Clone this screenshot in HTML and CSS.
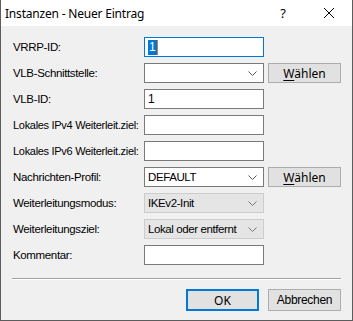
FILE: index.html
```html
<!DOCTYPE html>
<html lang="de">

<head>
    <meta charset="UTF-8">
    <meta name="viewport" content="width=device-width, initial-scale=1.0">
    <title>Instanzen - Neuer Eintrag</title>
    <link rel="stylesheet" href="styles.css">
</head>

<body>
    <div class="fenster">
        <div class="titel">
            <span class="titel-text">Instanzen - Neuer Eintrag</span>
            <span class="hilfe">?</span>
            <span class="schliessen">
                <svg width="12" height="12" viewBox="0 0 12 12">
                    <path d="M1 1 L11 11 M11 1 L1 11" stroke="#000" stroke-width="1" fill="none" />
                </svg>
            </span>
        </div>

        <div class="formular">
            <label>VRRP-ID:</label>
            <div class="feld fokus"><span class="markiert">1</span></div>
            <div></div>

            <label>VLB-Schnittstelle:</label>
            <div class="feld auswahl">
                <span></span>
                <svg class="pfeil" width="9" height="5" viewBox="0 0 9 5"><path d="M0.5 0.5 L4.5 4.5 L8.5 0.5" stroke="#555" fill="none" /></svg>
            </div>
            <button class="knopf"><u>W</u>ählen</button>

            <label>VLB-ID:</label>
            <div class="feld">1</div>
            <div></div>

            <label class="lang">Lokales IPv4 Weiterleit.ziel:</label>
            <div class="feld"></div>
            <div></div>

            <label class="lang">Lokales IPv6 Weiterleit.ziel:</label>
            <div class="feld"></div>
            <div></div>

            <label>Nachrichten-Profil:</label>
            <div class="feld auswahl">
                <span class="klein">DEFAULT</span>
                <svg class="pfeil" width="9" height="5" viewBox="0 0 9 5"><path d="M0.5 0.5 L4.5 4.5 L8.5 0.5" stroke="#555" fill="none" /></svg>
            </div>
            <button class="knopf"><u>W</u>ählen</button>

            <label>Weiterleitungsmodus:</label>
            <div class="feld auswahl grau">
                <span class="klein">IKEv2-Init</span>
                <svg class="pfeil" width="9" height="5" viewBox="0 0 9 5"><path d="M0.5 0.5 L4.5 4.5 L8.5 0.5" stroke="#777" fill="none" /></svg>
            </div>
            <div></div>

            <label>Weiterleitungsziel:</label>
            <div class="feld auswahl grau">
                <span class="klein">Lokal oder entfernt</span>
                <svg class="pfeil" width="9" height="5" viewBox="0 0 9 5"><path d="M0.5 0.5 L4.5 4.5 L8.5 0.5" stroke="#777" fill="none" /></svg>
            </div>
            <div></div>

            <label>Kommentar:</label>
            <div class="feld"></div>
            <div></div>
        </div>

        <div class="trenner"></div>

        <div class="knoepfe">
            <button class="knopf ok">OK</button>
            <button class="knopf abbr">Abbrechen</button>
        </div>
    </div>
</body>

</html>
```

FILE: styles.css
```css
html,
body {
    margin: 0;
    padding: 0;
    background-color: #f0f0f0;
}

.fenster {
    width: 353px;
    height: 321px;
    box-sizing: border-box;
    border: 1px solid #5c5c5c;
    border-top: none;
    background-color: #f0f0f0;
    font-family: "Liberation Sans", sans-serif;
    font-size: 12px;
    color: #000;
}

.titel {
    height: 26px;
    background-color: #fff;
    display: flex;
    align-items: center;
    padding-left: 4px;
    font-family: "Noto Sans", "Open Sans", sans-serif;
}

.titel-text {
    flex: 1;
    font-size: 12px;
    letter-spacing: -0.2px;
}

.hilfe {
    width: 46px;
    text-align: center;
    font-size: 13px;
}

.schliessen {
    width: 46px;
    display: flex;
    justify-content: center;
}

.formular {
    display: grid;
    grid-template-columns: 132px 124px 73px;
    grid-auto-rows: 20px;
    row-gap: 6px;
    padding: 11px 0 0 11px;
}

.formular label {
    display: flex;
    align-items: center;
    white-space: nowrap;
    font-size: 11.5px;
    letter-spacing: -0.35px;
    padding-left: 1px;
}

.formular label.lang {
    font-size: 11px;
    letter-spacing: -0.3px;
}

.feld {
    width: 120px;
    box-sizing: border-box;
    border: 1px solid #7a7a7a;
    background-color: #fff;
    display: flex;
    align-items: center;
    padding-left: 3px;
    font-size: 12px;
}

.fokus {
    border-color: #0078d7;
}

.markiert {
    background-color: #0078d7;
    color: #fff;
    border-right: 1px solid #e07030;
    padding: 0 1px;
    line-height: 15px;
}

.auswahl {
    justify-content: space-between;
    padding-right: 6px;
}

.auswahl.grau {
    background-color: #e5e5e5;
    border-color: #cccccc;
}

.klein {
    font-size: 11.5px;
    letter-spacing: -0.4px;
}

.knopf {
    box-sizing: border-box;
    border: 1px solid #adadad;
    background-color: #e1e1e1;
    font-family: "Noto Sans", "Open Sans", sans-serif;
    font-size: 12px;
    color: #000;
    padding: 0;
    height: 20px;
}

.knopf u {
    text-underline-offset: 2px;
}

.trenner {
    margin: 13px 11px 0 11px;
    border-top: 1px solid #a0a0a0;
    border-bottom: 1px solid #fff;
}

.knoepfe {
    display: flex;
    justify-content: flex-end;
    gap: 9px;
    padding: 9px 11px 0 0;
}

.knoepfe .knopf {
    width: 73px;
    height: 22px;
}

.knoepfe .ok {
    border: 2px solid #0078d7;
}

.knoepfe .abbr {
    font-family: "Liberation Sans", sans-serif;
    letter-spacing: -0.3px;
}
```
